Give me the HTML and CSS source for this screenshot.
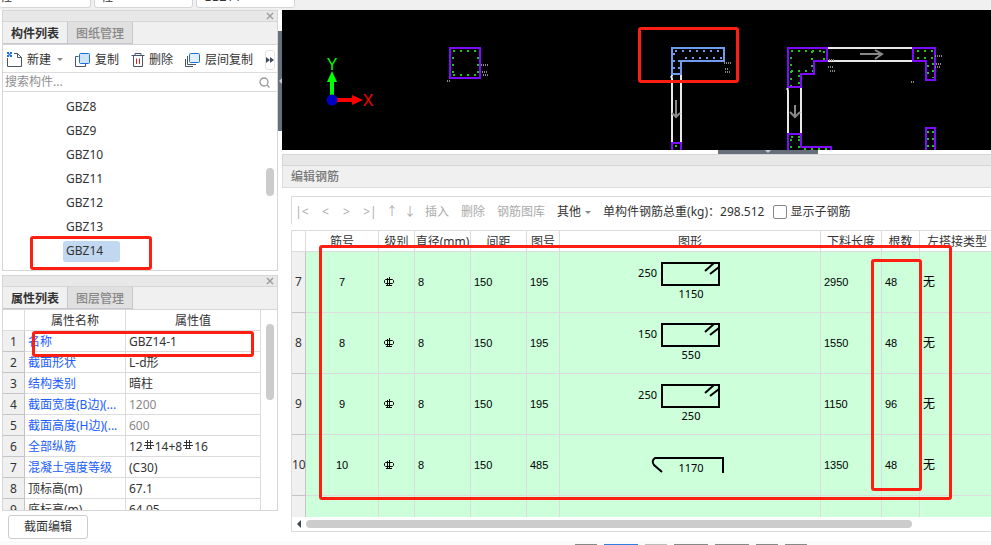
FILE: index.html
```html
<!DOCTYPE html>
<html lang="zh-CN">
<head>
<meta charset="utf-8">
<title>编辑钢筋</title>
<link rel="stylesheet" href="styles.css">
</head>
<body>
<svg class="defs" aria-hidden="true">
  <defs>
    <symbol id="rebar" viewBox="0 0 10 10"><path d="M3.5 0V8M6.5 0V8M1 2.500H9M0 5.500H10M2 8.500H8" fill="none" stroke="currentColor"/></symbol>
    <symbol id="rebar-grade" viewBox="0 0 10 10"><path d="M3.500 1V9M5.500 0V9M1.500 2.500H8.500L9.500 3.500V5.500L8.500 6.500H1.500L.5 5.500V3.500ZM2 8.500H8" fill="none" stroke="currentColor"/></symbol>
    <symbol id="close" viewBox="0 0 8 8"><path d="M1 1L7 7M7 1L1 7" fill="none" stroke="#999" stroke-width="1.300"/></symbol>
    <symbol id="stirrup" viewBox="0 0 140 60"><path d="M42 11H99V33H42ZM85 19L94 11M90 22L99 15" fill="none" stroke="#000" stroke-width="2"/></symbol>
  </defs>
</svg>
<div class="app">
  <header class="topbar">
    <select aria-label="楼层"><option>柱</option></select>
    <select aria-label="类型"><option>柱</option></select>
    <select aria-label="构件"><option>GBZ14</option></select>
  </header>
  <main class="work">
    <aside class="side">
      <section class="panel">
        <div class="titlebar"><button aria-label="关闭"><svg width="8" height="8"><use href="#close"/></svg></button></div>
        <nav class="tabs"><button class="active">构件列表</button><button>图纸管理</button></nav>
        <div class="tools">
          <button><svg width="16" height="16" viewBox="0 0 16 16"><path d="M.5 6V14.500H14.500V5.500L10.500 1.500H7M10.500 1.500V5.500H14.500" fill="none" stroke="#4a5568"/><path d="M0 0h2v2H0zM3 0h2v2H3zM1.500 1.500h2v2h-2zM0 3h2v2H0zM3 3h2v2H3z" fill="#1b6fd8"/></svg>新建<i class="caret"></i></button>
          <button><svg width="16" height="16" viewBox="0 0 16 16"><path d="M3.500 4.500H.5V14.500H10.500V11.500" fill="none" stroke="#4a5568"/><rect x="4.500" y="1.500" width="10" height="10" rx="1" fill="#cfe3fc" stroke="#1b6fd8"/></svg>复制</button>
          <button><svg width="14" height="16" viewBox="0 0 14 16"><path d="M.5 3.500H13.500M4 3.500V1.500H10V3.500M2.500 4V14.500H11.500V4" fill="none" stroke="#4a5568"/><path d="M5.500 6.500V12M8.500 6.500V12" stroke="#e02020"/></svg>删除</button>
          <button><svg width="16" height="16" viewBox="0 0 16 16"><path d="M2.500 4V12.500H11M.5 7V14.500H8" fill="none" stroke="#4a5568"/><rect x="4.500" y="1.500" width="10" height="9" rx="1" fill="#e2eefd" stroke="#1b6fd8"/></svg>层间复制</button>
          <button class="more" aria-label="更多"><svg width="8" height="6" viewBox="0 0 8 6"><path d="M0 0L4 3L0 6ZM4 0L8 3L4 6Z" fill="#444d5c"/></svg></button>
        </div>
        <label class="search"><input type="text" placeholder="搜索构件..." aria-label="搜索构件"><svg width="11" height="11" viewBox="0 0 11 11"><circle cx="5" cy="5" r="4" fill="none" stroke="#999" stroke-width="1.300"/><path d="M8 8L10.500 10.500" stroke="#999" stroke-width="1.300"/></svg></label>
        <div class="scroller">
          <ul class="tree"><li><span>GBZ8</span></li><li><span>GBZ9</span></li><li><span>GBZ10</span></li><li><span>GBZ11</span></li><li><span>GBZ12</span></li><li><span>GBZ13</span></li><li><span class="selected">GBZ14</span></li></ul>
          <i class="thumb thumb-tree"></i>
        </div>
        <i class="mark mark-item"></i>
      </section>
      <section class="panel">
        <div class="titlebar"><button aria-label="关闭"><svg width="8" height="8"><use href="#close"/></svg></button></div>
        <nav class="tabs"><button class="active">属性列表</button><button>图层管理</button></nav>
        <div class="scroller">
          <table class="props">
            <colgroup><col class="p-no"><col class="p-name"><col></colgroup>
            <thead><tr><th></th><th>属性名称</th><th>属性值</th></tr></thead>
            <tbody>
              <tr><th>1</th><td>名称</td><td>GBZ14-1</td></tr>
              <tr><th>2</th><td>截面形状</td><td>L-d形</td></tr>
              <tr><th>3</th><td>结构类别</td><td>暗柱</td></tr>
              <tr class="locked"><th>4</th><td>截面宽度(B边)(...</td><td>1200</td></tr>
              <tr class="locked"><th>5</th><td>截面高度(H边)(...</td><td>600</td></tr>
              <tr><th>6</th><td>全部纵筋</td><td>12<svg class="bar" width="10" height="10"><use href="#rebar"/></svg>14+8<svg class="bar" width="10" height="10"><use href="#rebar"/></svg>16</td></tr>
              <tr><th>7</th><td>混凝土强度等级</td><td>(C30)</td></tr>
              <tr class="plain"><th>8</th><td>顶标高(m)</td><td>67.1</td></tr>
              <tr class="plain"><th>9</th><td>底标高(m)</td><td>64.05</td></tr>
            </tbody>
          </table>
          <i class="thumb thumb-props"></i>
        </div>
        <i class="mark mark-name"></i>
      </section>
      <button class="edit">截面编辑</button>
    </aside>
    <button class="vsplit" aria-label="收起侧栏"><svg width="4" height="8" viewBox="0 0 4 8"><path d="M4 1L1 4L4 7Z" fill="#c8ccd2"/></svg></button>
    <div class="content">
      <div class="view">
        <svg class="drawing" role="img" aria-label="平面图">
          <path d="M50 85V71" stroke="#0f0" stroke-width="4"/><path d="M50 61L55 72H45Z" fill="#0f0"/>
          <path d="M54 90H70" stroke="#f00" stroke-width="4"/><path d="M81 90L70 95V85Z" fill="#f00"/>
          <circle cx="50" cy="90" r="5.500" fill="#0000c4"/>
          <text x="50" y="60" class="axis axis-y">Y</text><text x="86" y="96" class="axis axis-x">X</text>
          <g class="wall"><path d="M390 64V132M399 64V132M506 77V124M519 77V124M545 38H632M545 51H632"/></g>
          <g class="column">
            <path d="M168 38H198V68H168Z"/>
            <path d="M390 145V133H399V145"/>
            <path d="M506 38H545V51H532V64H519V77H506Z"/>
            <path d="M631 38H653V70H644V51H631Z"/>
            <path d="M644 145V118H653V145"/>
            <path d="M506 145V124H519V137H549V145"/>
          </g>
          <path class="picked" d="M390 38H442V51H399V64H390Z"/>
          <g class="steel">
            <path d="M171 41H196M171 65H196M171 47V64M196 47V64"/>
            <path d="M509 41H543M509 61H531M530 41V62M509 47V76M517 65V76M542 41V50"/>
            <path d="M635 41H651M635 48H651M651 53V68M646 55V68M646 121V138M651 121V138"/>
            <path d="M509 127H518M509 129V140M517 129V140M522 139H547M393 136H398"/>
          </g>
          <path class="steel-picked" d="M393 41H440M403 48H440M392 43V62M397 50V62"/>
          <g class="arrow"><path d="M394 90V107M390 103L394 107L398 103M513 95V106M508 102L513 107L518 102M578 44H599M593 40L600 44L593 49"/></g>
          <path class="speck" d="M199 55H206M200 62H205M201 65H206M165 71H168M442 53H449M443 59H447M443 62H448M388 67H391M547 50H553M546 57H552M548 61H553M653 46H660M654 54H659M653 57H659M629 72H632M504 79H507"/>
        </svg>
        <i class="mark mark-view"></i>
      </div>
      <div class="hsplit"><button aria-label="收起面板"><svg width="6" height="3" viewBox="0 0 6 3"><path d="M0 0H6L3 3Z" fill="#c8ccd2"/></svg></button></div>
      <section class="editor">
        <div class="titlebar"></div>
        <h2>编辑钢筋</h2>
        <div class="editor-body">
          <div class="editbar">
            <button class="n1">|&lt;</button><button class="n2">&lt;</button><button class="n2">&gt;</button><button class="n1">&gt;|</button><button class="n3">↑</button><button class="n3">↓</button>
            <button>插入</button><button>删除</button><button>钢筋图库</button><button class="on">其他<i class="caret"></i></button>
            <span class="total">单构件钢筋总重(kg)：298.512</span>
            <label><input type="checkbox">显示子钢筋</label>
          </div>
          <div class="grid-frame">
            <div class="grid-scroll">
              <table class="bars">
                <colgroup><col class="c1"><col class="c2"><col class="c3"><col class="c4"><col class="c4"><col class="c5"><col class="c6"><col class="c7"><col class="c8"><col class="c9"></colgroup>
                <thead><tr><th></th><th>筋号</th><th>级别</th><th>直径(mm)</th><th>间距</th><th>图号</th><th>图形</th><th>下料长度</th><th>根数</th><th>左搭接类型</th></tr></thead>
                <tbody>
                  <tr><th>7</th><td>7</td><td><svg width="10" height="10"><use href="#rebar-grade"/></svg></td><td>8</td><td>150</td><td>195</td><td><svg class="shape" width="140" height="60"><use href="#stirrup"/><text x="37" y="25" text-anchor="end">250</text><text x="71" y="46" text-anchor="middle">1150</text></svg></td><td>2950</td><td>48</td><td>无</td></tr>
                  <tr><th>8</th><td>8</td><td><svg width="10" height="10"><use href="#rebar-grade"/></svg></td><td>8</td><td>150</td><td>195</td><td><svg class="shape" width="140" height="60"><use href="#stirrup"/><text x="37" y="25" text-anchor="end">150</text><text x="71" y="46" text-anchor="middle">550</text></svg></td><td>1550</td><td>48</td><td>无</td></tr>
                  <tr><th>9</th><td>9</td><td><svg width="10" height="10"><use href="#rebar-grade"/></svg></td><td>8</td><td>150</td><td>195</td><td><svg class="shape" width="140" height="60"><use href="#stirrup"/><text x="37" y="25" text-anchor="end">250</text><text x="71" y="46" text-anchor="middle">250</text></svg></td><td>1150</td><td>96</td><td>无</td></tr>
                  <tr><th>10</th><td>10</td><td><svg width="10" height="10"><use href="#rebar-grade"/></svg></td><td>8</td><td>150</td><td>485</td><td><svg class="shape" width="140" height="60"><path d="M42 37L34 30Q31 26 35 23H103V38" fill="none" stroke="#000" stroke-width="2"/><text x="71" y="37" text-anchor="middle">1170</text></svg></td><td>1350</td><td>48</td><td>无</td></tr>
                  <tr><th></th><td></td><td></td><td></td><td></td><td></td><td></td><td></td><td></td><td></td></tr>
                </tbody>
              </table>
            </div>
            <div class="hbar"><svg width="4" height="8" viewBox="0 0 4 8"><path d="M4 0V8L0 4Z" fill="#3d4654"/></svg><i></i></div>
            <i class="mark mark-rows"></i>
            <i class="mark mark-count"></i>
          </div>
        </div>
      </section>
    </div>
  </main>
  <footer class="status"><i class="s"></i><i class="l blue"></i><i class="s pale"></i><i class="l"></i><i class="l"></i><i class="s"></i><i class="s"></i></footer>
</div>
</body>
</html>
```
FILE: styles.css
```css
* { box-sizing: border-box; }
body { margin: 0; background: #fff; color: #333; font: 12px/20px "Noto Sans", "Noto Sans CJK SC", sans-serif; }
button, input, select { font: inherit; color: inherit; }
button { padding: 0; border: 0; background: none; white-space: nowrap; }
svg { display: block; flex: none; }
.defs { position: absolute; width: 0; height: 0; }
.app { display: flex; flex-direction: column; height: 100vh; overflow: hidden; }

.topbar { display: flex; align-items: flex-end; gap: 3px; flex: none; height: 10px; padding-bottom: 2px; overflow: hidden; background: #f0f0f0; }
.topbar select { appearance: none; width: 99px; height: 22px; padding: 0 6px 2px; border: 1px solid #d4d4d4; border-radius: 3px; background: #fff; line-height: 20px; }
.topbar select:first-child { width: 91px; padding-left: 0; border-left: 0; }

.work { display: grid; grid-template: minmax(0, 1fr) / 278px 4px minmax(0, 1fr); flex: 1; min-height: 0; }
.side { display: grid; grid-template-rows: minmax(0, 261fr) minmax(0, 236fr) 24px; row-gap: 4px; padding: 0 0 2px 2px; }
.panel { position: relative; display: flex; flex-direction: column; min-height: 0; border: 1px solid #d6d6d6; }
.titlebar { display: flex; justify-content: flex-end; align-items: center; flex: none; height: 11px; padding-right: 3px; background: #e8e8e8; border-bottom: 1px solid #d6d6d6; }
.tabs { display: flex; flex: none; height: 23px; background: #f0f0f0; border-bottom: 1px solid #d6d6d6; }
.tabs button { width: 65px; padding-top: 2px; color: #888; font-weight: 500; background: #e0e0e0; border: 1px solid #c4c7cd; border-width: 0 1px 1px 0; }
.tabs .active { background: #f0f0f0; color: #333; font-weight: bold; }
.tools { display: flex; align-items: center; gap: 12px; flex: none; height: 28px; padding: 2px 0 0 4px; border-bottom: 1px solid #dcdcdc; }
.tools button { display: flex; align-items: center; gap: 4px; }
.caret { width: 0; height: 0; border: 3px solid transparent; border-top-color: #888; border-bottom: 0; }
.tools .caret { margin-left: 2px; }
.editbar .caret { margin-left: 4px; }
.tools .more { justify-content: center; width: 10px; height: 20px; border: 1px solid #e4e4e4; border-radius: 3px; }
.search { display: flex; align-items: center; flex: none; height: 19px; padding: 0 7px 0 2px; border-bottom: 1px solid #dcdcdc; }
.search input { flex: 1; min-width: 0; height: 18px; padding: 0; border: 0; background: none; }
.search input::placeholder { color: #909090; }
.scroller { position: relative; flex: 1; min-height: 0; overflow: hidden; }
.thumb { position: absolute; right: 3px; width: 8px; border-radius: 4px; background: #ccc; }
.thumb-tree { top: 76px; height: 28px; }
.thumb-props { top: 14px; height: 76px; }
.tree { margin: 0; padding: 3px 0 0 60px; list-style: none; }
.tree li { display: flex; align-items: center; height: 24px; }
.tree span { min-width: 57px; height: 21px; padding-left: 3px; border-radius: 3px; }
.tree .selected { background: #c1d8f0; }

table { border-collapse: separate; border-spacing: 0; table-layout: fixed; }
th { font-weight: normal; }
.props { width: 258px; }
.p-no { width: 22px; }
.p-name { width: 101px; }
.props th, .props td { height: 21px; padding: 2px 0 0 3px; border: 1px solid #dcdcdc; border-width: 0 1px 1px 0; line-height: 18px; white-space: nowrap; overflow: hidden; }
.props th { padding-left: 0; text-align: center; }
.props tbody th { background: #f0f0f0; border-color: #c4c4c4; }
.props td:nth-child(2) { color: #1a5cff; }
.props .plain td:nth-child(2) { color: #333; }
.props .locked td:last-child { color: #888; }
.bar { display: inline-block; margin: 0 1px; vertical-align: 1px; }
.edit { justify-self: start; width: 80px; margin-left: 6px; border: 1px solid #ccc; border-radius: 3px; background: #fff; }

.vsplit { display: flex; align-items: center; height: 100px; margin-top: 21px; background: #66707c; }
.content { display: flex; flex-direction: column; min-width: 0; min-height: 0; }
.view { position: relative; flex: none; height: 140px; background: #000; }
.drawing { width: 100%; height: 140px; }
.axis { font-family: "Liberation Sans", sans-serif; font-size: 16px; text-anchor: middle; }
.axis-y { fill: #0f0; }
.axis-x { fill: #f00; }
.wall { stroke: #e8e8e8; stroke-width: 2; }
.column { fill: #000; stroke: #7d0cff; stroke-width: 2; }
.picked { fill: #000; stroke: #709cf0; stroke-width: 2; }
.steel { fill: none; stroke: #1fc41f; stroke-width: 2; stroke-dasharray: 2 5; }
.steel-picked { fill: none; stroke: #709cf0; stroke-width: 2; stroke-dasharray: 2 5; }
.arrow { fill: none; stroke: #888; stroke-width: 2; }
.speck { fill: none; stroke: #888; stroke-width: 2; stroke-dasharray: 1 1; }
.hsplit { flex: none; height: 4px; }
.hsplit button { display: flex; justify-content: center; width: 100px; height: 4px; margin-left: 436px; background: #66707c; }

.editor { display: flex; flex-direction: column; flex: 1; min-height: 0; }
.editor .titlebar { height: 12px; border-top: 1px solid #d6d6d6; border-left: 1px solid #d6d6d6; }
.editor h2 { flex: none; height: 22px; margin: 0; padding-left: 8px; border: 1px solid #dcdcdc; border-width: 0 0 1px 1px; background: #f0f0f0; color: #777; font-size: 12px; font-weight: 500; line-height: 22px; }
.editor-body { display: flex; flex-direction: column; gap: 6px; flex: 1; min-height: 0; padding: 8px 0 9px 9px; }
.editbar { display: flex; align-items: center; gap: 12px; flex: none; height: 28px; padding: 3px 0 0 3px; border: 1px solid #dcdcdc; border-width: 1px 0 0 1px; color: #333; white-space: nowrap; }
.editbar button { color: #aaa; }
.editbar .n1 { width: 14px; }
.editbar .n2 { width: 9px; }
.editbar .n3 { width: 12px; margin: 0 -3px; }
.editbar .on { display: flex; align-items: center; color: #333; }
.editbar label { display: flex; align-items: center; gap: 3px; margin-left: -3px; }
.editbar input { appearance: none; width: 14px; height: 14px; margin: 0; border: 1px solid #888; border-radius: 2px; background: #fff; }
.grid-frame { position: relative; display: flex; flex-direction: column; flex: 1; min-height: 0; border: 1px solid #dcdcdc; border-width: 1px 0 1px 1px; }
.grid-scroll { flex: 1; min-height: 0; overflow: hidden; }
.bars { width: 703px; }
.c1 { width: 14px; }
.c2 { width: 73px; }
.c3 { width: 36px; }
.c4 { width: 56px; }
.c5 { width: 33px; }
.c6 { width: 261px; }
.c7 { width: 61px; }
.c8 { width: 38px; }
.c9 { width: 75px; }
.bars th, .bars td { padding: 0; border: 1px solid #dcdcdc; border-width: 0 1px 1px 0; white-space: nowrap; }
.bars thead th { height: 21px; padding-top: 2px; line-height: 18px; }
.bars tbody th { background: #f0f0f0; border-color: #c4c4c4; }
.bars td { height: 61px; padding-left: 3px; background: #ccffda; color: #000; font-family: "Liberation Sans", "Noto Sans CJK SC", sans-serif; font-size: 11px; }
.bars td:nth-child(2) { padding: 0; text-align: center; }
.bars td:nth-child(3) { padding-left: 5px; }
.bars td:nth-child(7) { padding: 0; }
.bars td:last-child { font-size: 12px; }
.shape { margin: 0 auto; font-family: "Noto Sans", sans-serif; font-size: 11px; }
.hbar { display: flex; align-items: center; gap: 5px; flex: none; height: 14px; padding-left: 5px; background: #fff; }
.hbar i { width: 88%; max-width: 606px; height: 8px; border-radius: 4px; background: #ccc; }

.mark { position: absolute; border: 3px solid #ff1f12; border-radius: 3px; pointer-events: none; }
.mark-item { left: 27px; top: 225px; width: 122px; height: 34px; }
.mark-name { left: 29px; top: 55px; width: 222px; height: 26px; }
.mark-view { left: 356px; top: 17px; width: 101px; height: 56px; }
.mark-rows { left: 27px; top: 14px; width: 633px; height: 255px; }
.mark-count { left: 579px; top: 28px; width: 51px; height: 232px; }

.status { display: flex; align-items: flex-end; gap: 7px; flex: none; height: 4px; padding-left: 575px; background: #fbfbfb; }
.status i { height: 1px; background: #888; }
.status .s { width: 22px; }
.status .l { width: 34px; }
.status .blue { background: #2f7fe0; }
.status .pale { background: #bbb; }
```
